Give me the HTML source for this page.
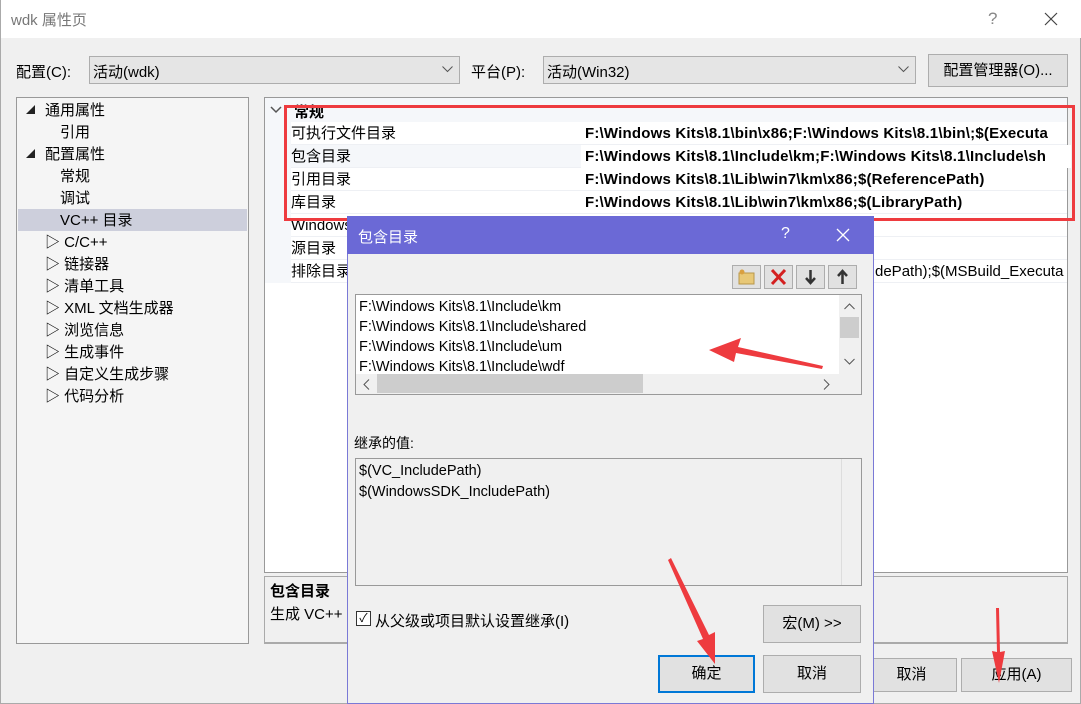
<!DOCTYPE html><html><head><meta charset="utf-8"><style>
*{box-sizing:border-box;margin:0;padding:0}
body{width:1081px;height:704px;overflow:hidden;background:#f0f0f0;font-family:"Liberation Sans","Noto Sans CJK SC",sans-serif;font-size:14px;color:#000;position:relative;border-left:1px solid #aaa;border-right:1px solid #aaa;border-bottom:1px solid #aaa}
.a{position:absolute;white-space:nowrap}
.combo{position:absolute;background:#e5e5e5;border:1px solid #adadad;padding:4px 3px;font-size:15px}
.btn{position:absolute;background:#e1e1e1;border:1px solid #adadad;text-align:center;font-size:14px}
.tree div{position:absolute;left:0;width:228px;height:22px;line-height:22px;font-size:15px}
.tri{display:inline-block;width:0;height:0;border-left:9px solid transparent;border-bottom:9px solid #222;margin-right:10px;vertical-align:1px}
.row{position:absolute;left:290px;width:776px;height:23px;line-height:23px;border-bottom:1px solid #eef0f4;font-size:15px}
.row .v{position:absolute;left:294px;font-weight:bold;font-size:15px;letter-spacing:0.2px}
</style></head><body>
<div class="a" style="left:0;top:0;width:1081px;height:38px;background:#fff"></div>
<div class="a" style="left:10px;top:9px;font-size:15px;color:#777">wdk 属性页</div>
<div class="a" style="left:987px;top:9px;font-size:17px;color:#888">?</div>
<svg class="a" style="left:1043px;top:12px" width="14" height="14"><path d="M1 1L13 13M13 1L1 13" stroke="#444" stroke-width="1.2"/></svg>

<div class="a" style="left:15px;top:61px;font-size:15px">配置(C):</div>
<div class="combo" style="left:88px;top:56px;width:371px;height:28px">活动(wdk)<svg style="position:absolute;right:6px;top:9px" width="11" height="7"><path d="M0.5 0.5L5.5 5.5L10.5 0.5" stroke="#555" fill="none"/></svg></div>
<div class="a" style="left:470px;top:61px;font-size:15px">平台(P):</div>
<div class="combo" style="left:542px;top:56px;width:373px;height:28px">活动(Win32)<svg style="position:absolute;right:6px;top:9px" width="11" height="7"><path d="M0.5 0.5L5.5 5.5L10.5 0.5" stroke="#555" fill="none"/></svg></div>
<div class="btn" style="left:927px;top:54px;width:140px;height:33px;line-height:31px;font-size:15px">配置管理器(O)...</div>

<div class="a tree" style="left:15px;top:97px;width:233px;height:547px;background:#f5f5f5;border:1px solid #999">
<div style="left:1px;width:229px;background:#cdcfdc;top:111px"></div>
<div style="top:2px;left:9px"><span class="tri"></span>通用属性</div>
<div style="top:24px;left:43px">引用</div>
<div style="top:46px;left:9px"><span class="tri"></span>配置属性</div>
<div style="top:68px;left:43px">常规</div>
<div style="top:90px;left:43px">调试</div>
<div style="top:112px;left:43px">VC++ 目录</div>
<div style="top:134px;left:28px">▷ C/C++</div>
<div style="top:156px;left:28px">▷ 链接器</div>
<div style="top:178px;left:28px">▷ 清单工具</div>
<div style="top:200px;left:28px">▷ XML 文档生成器</div>
<div style="top:222px;left:28px">▷ 浏览信息</div>
<div style="top:244px;left:28px">▷ 生成事件</div>
<div style="top:266px;left:28px">▷ 自定义生成步骤</div>
<div style="top:288px;left:28px">▷ 代码分析</div>
</div>

<div class="a" style="left:263px;top:97px;width:804px;height:476px;background:#fff;border:1px solid #999"></div>
<div class="a" style="left:264px;top:98px;width:802px;height:185px;background:#f5f7fa"></div>
<svg class="a" style="left:269px;top:106px" width="12" height="8"><path d="M1 1L6 6L11 1" stroke="#555" stroke-width="1.5" fill="none"/></svg>
<div class="a" style="left:293px;top:101px;font-weight:bold;font-size:15px">常规</div>
<div class="row" style="top:122px;background:#fff">可执行文件目录<span class="v">F:\Windows Kits\8.1\bin\x86;F:\Windows Kits\8.1\bin\;$(Executa</span></div>
<div class="row" style="top:145px">包含目录<span class="v" style="background:#fff;left:290px;padding-left:4px;width:490px">F:\Windows Kits\8.1\Include\km;F:\Windows Kits\8.1\Include\sh</span></div>
<div class="row" style="top:168px;background:#fff">引用目录<span class="v">F:\Windows Kits\8.1\Lib\win7\km\x86;$(ReferencePath)</span></div>
<div class="row" style="top:191px;background:#fff">库目录<span class="v">F:\Windows Kits\8.1\Lib\win7\km\x86;$(LibraryPath)</span></div>
<div class="row" style="top:214px;background:#fff">Windows</div>
<div class="row" style="top:237px;background:#fff">源目录</div>
<div class="row" style="top:260px;background:#fff">排除目录<span style="position:absolute;left:584px;font-size:15px">dePath);$(MSBuild_Executa</span></div>
<div class="a" style="left:283px;top:105px;width:791px;height:116px;border:3px solid #ee3b3f"></div>

<div class="a" style="left:263px;top:576px;width:804px;height:68px;border:1px solid #aaa;border-bottom:2px solid #aaa"></div>
<div class="a" style="left:269px;top:580px;font-weight:bold;font-size:15px">包含目录</div>
<div class="a" style="left:269px;top:603px;font-size:15px">生成 VC++</div>

<div class="btn" style="left:820px;top:658px;width:136px;height:34px;line-height:32px;font-size:15px">　　　取消</div>
<div class="btn" style="left:960px;top:658px;width:111px;height:34px;line-height:32px;font-size:15px">应用(A)</div>

<!-- dialog -->
<div class="a" style="left:346px;top:216px;width:527px;height:488px;background:#f0f0f0;border:1px solid #7a79d6"></div>
<div class="a" style="left:346px;top:216px;width:527px;height:38px;background:#6b69d6"></div>
<div class="a" style="left:357px;top:226px;color:#fff;font-size:15px">包含目录</div>
<div class="a" style="left:780px;top:225px;color:#fff;font-size:16px">?</div>
<svg class="a" style="left:835px;top:228px" width="14" height="14"><path d="M1 1L13 13M13 1L1 13" stroke="#fff" stroke-width="1.3"/></svg>

<div class="btn" style="left:731px;top:265px;width:29px;height:24px"><svg width="27" height="22"><rect x="6" y="7" width="15" height="11" fill="#e8c877" stroke="#b8964a"/><circle cx="9" cy="6" r="2.5" fill="#d9a040"/></svg></div>
<div class="btn" style="left:763px;top:265px;width:29px;height:24px"><svg width="27" height="22"><path d="M7 4L20 18M20 4L7 18" stroke="#d42020" stroke-width="3"/></svg></div>
<div class="btn" style="left:795px;top:265px;width:29px;height:24px"><svg width="27" height="22"><path d="M13.5 4V16M9 12L13.5 17L18 12" stroke="#333" stroke-width="2.5" fill="none"/></svg></div>
<div class="btn" style="left:827px;top:265px;width:29px;height:24px"><svg width="27" height="22"><path d="M13.5 18V6M9 10L13.5 5L18 10" stroke="#333" stroke-width="2.5" fill="none"/></svg></div>

<div class="a" style="left:354px;top:294px;width:507px;height:101px;border:1px solid #999;background:#fff"></div>
<div class="a" style="left:358px;top:297px;line-height:20px;font-size:14.5px">F:\Windows Kits\8.1\Include\km<br>F:\Windows Kits\8.1\Include\shared<br>F:\Windows Kits\8.1\Include\um<br>F:\Windows Kits\8.1\Include\wdf</div>
<div class="a" style="left:838px;top:295px;width:22px;height:99px;background:#f0f0f0"></div>
<div class="a" style="left:839px;top:317px;width:19px;height:21px;background:#cdcdcd"></div>
<svg class="a" style="left:843px;top:303px" width="11" height="7"><path d="M0.5 6L5.5 1L10.5 6" stroke="#555" fill="none"/></svg>
<svg class="a" style="left:843px;top:358px" width="11" height="7"><path d="M0.5 1L5.5 6L10.5 1" stroke="#555" fill="none"/></svg>
<div class="a" style="left:355px;top:374px;width:483px;height:20px;background:#f0f0f0"></div>
<div class="a" style="left:376px;top:374px;width:266px;height:19px;background:#cdcdcd"></div>
<svg class="a" style="left:362px;top:379px" width="7" height="11"><path d="M6 0.5L1 5.5L6 10.5" stroke="#555" fill="none"/></svg>
<svg class="a" style="left:822px;top:379px" width="7" height="11"><path d="M1 0.5L6 5.5L1 10.5" stroke="#555" fill="none"/></svg>

<div class="a" style="left:353px;top:433px;font-size:14px">继承的值:</div>
<div class="a" style="left:354px;top:458px;width:507px;height:128px;border:1px solid #999;background:#f0f0f0"></div>
<div class="a" style="left:840px;top:459px;width:20px;height:126px;border-left:1px solid #ddd"></div>
<div class="a" style="left:358px;top:461px;line-height:21px;font-size:14.5px">$(VC_IncludePath)<br>$(WindowsSDK_IncludePath)</div>

<div class="a" style="left:355px;top:611px;width:15px;height:15px;border:1px solid #333;background:#fff;font-size:12px;line-height:13px;text-align:center">✓</div>
<div class="a" style="left:374px;top:610px;font-size:15px">从父级或项目默认设置继承(I)</div>
<div class="btn" style="left:762px;top:605px;width:98px;height:38px;line-height:36px;font-size:15px">宏(M) &gt;&gt;</div>
<div class="btn" style="left:657px;top:655px;width:97px;height:38px;line-height:34px;border:2px solid #0078d7;font-size:15px">确定</div>
<div class="btn" style="left:762px;top:655px;width:98px;height:38px;line-height:36px;font-size:15px">取消</div>

<svg class="a" style="left:0;top:0" width="1081" height="704">
<polygon points="708,350 740,338 737,347 822,366 821,369 735,353 733,362" fill="#ee3b3f"/>
<polygon points="667,560 670,558 708,635 714,632 714,664 696,641 702,639" fill="#ee3b3f"/>
<polygon points="995,608 998,608 999,652 1004,651 998,683 991,651 996,652" fill="#ee3b3f"/>
</svg>
</body></html>
